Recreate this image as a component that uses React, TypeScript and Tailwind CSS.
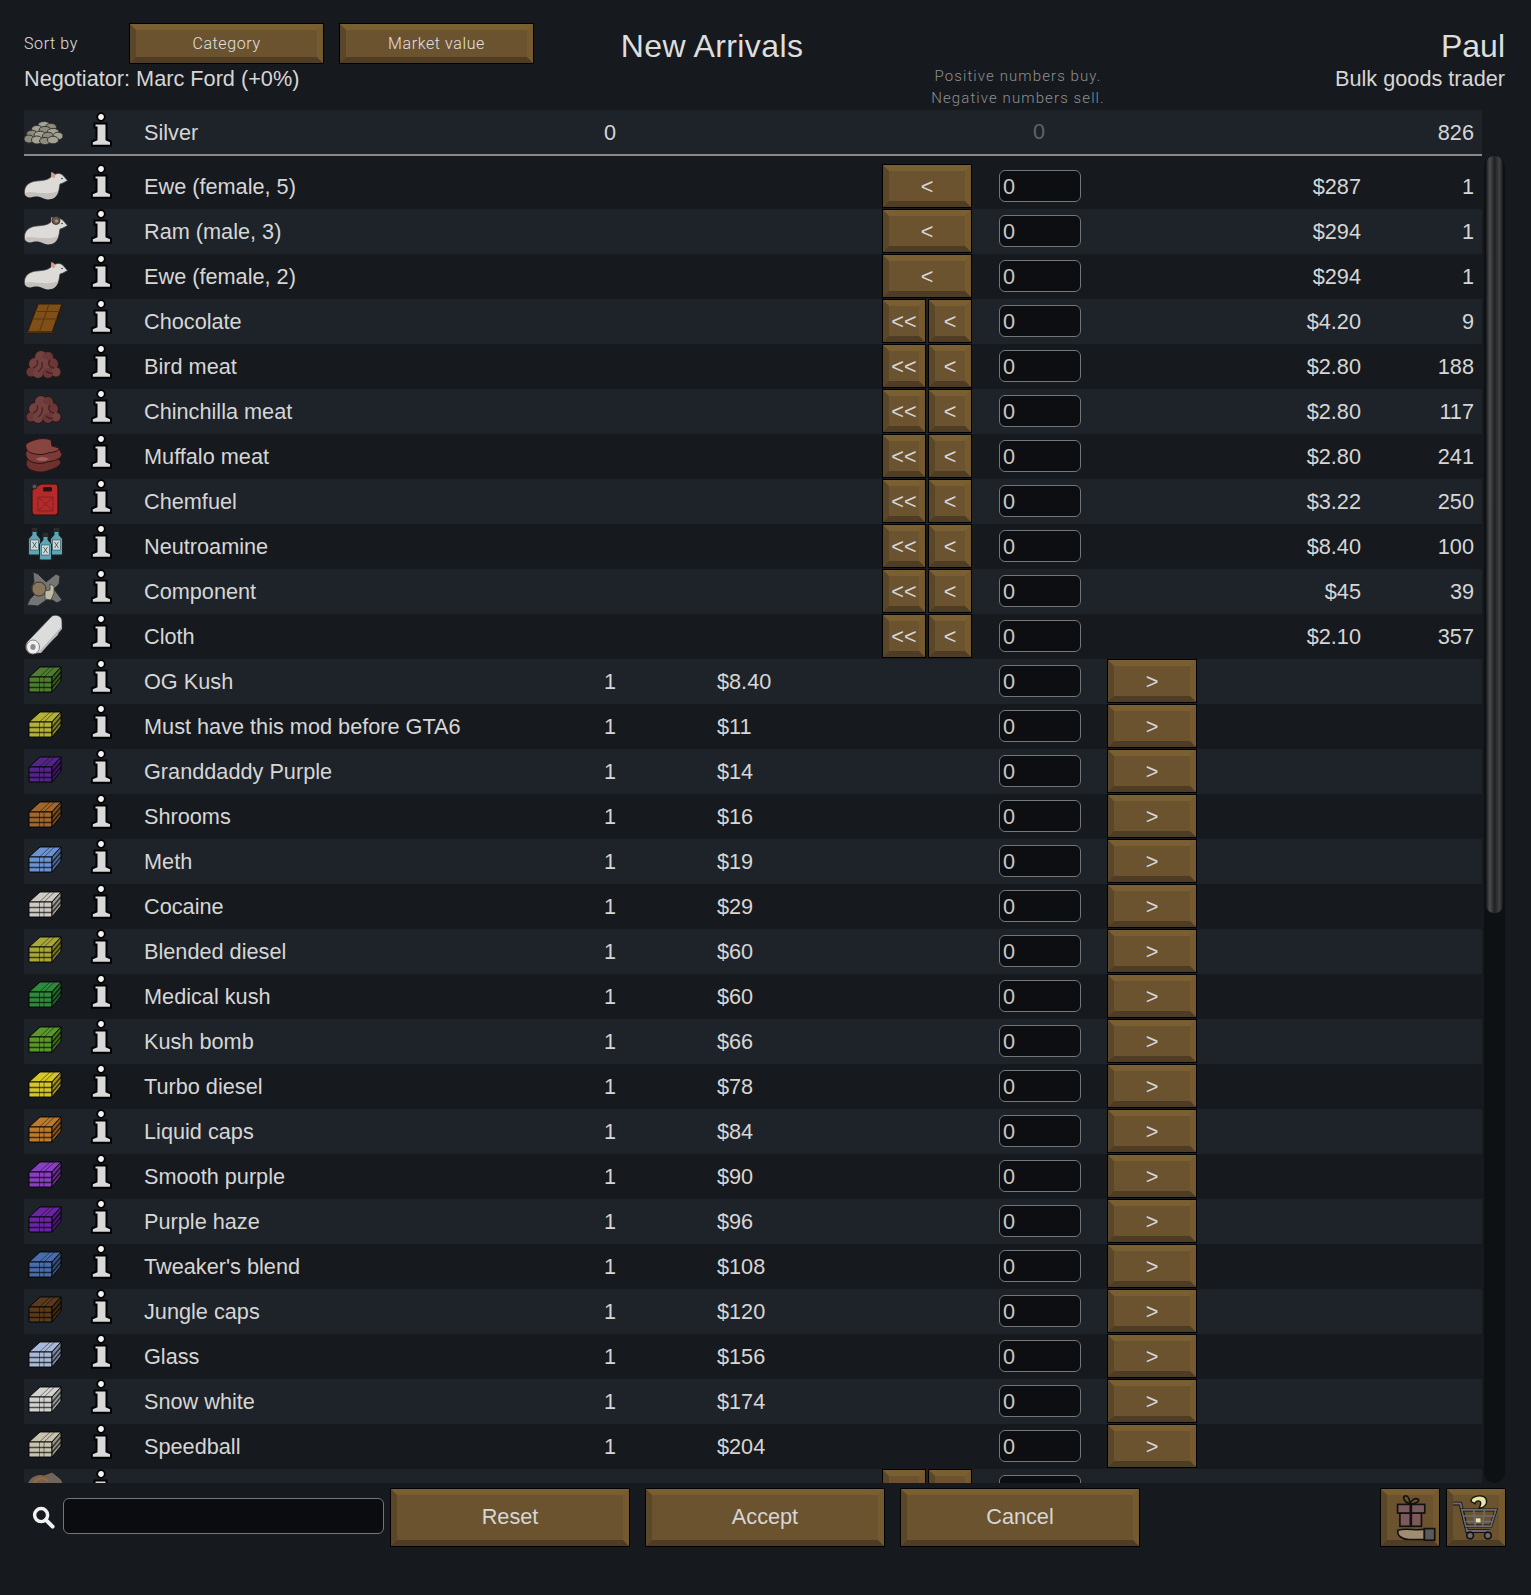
import type { ReactNode } from 'react'

type Item = {
  icon: string
  name: string
  price: string
  stock?: string
  color?: string
  double?: boolean
}

const traderItems: Item[] = [
  { icon: 'ewe', name: 'Ewe (female, 5)', price: '$287', stock: '1' },
  { icon: 'ram', name: 'Ram (male, 3)', price: '$294', stock: '1' },
  { icon: 'ewe', name: 'Ewe (female, 2)', price: '$294', stock: '1' },
  { icon: 'chocolate', name: 'Chocolate', price: '$4.20', stock: '9', double: true },
  { icon: 'meat', name: 'Bird meat', price: '$2.80', stock: '188', double: true },
  { icon: 'meat', name: 'Chinchilla meat', price: '$2.80', stock: '117', double: true },
  { icon: 'muffalo', name: 'Muffalo meat', price: '$2.80', stock: '241', double: true },
  { icon: 'chemfuel', name: 'Chemfuel', price: '$3.22', stock: '250', double: true },
  { icon: 'neutroamine', name: 'Neutroamine', price: '$8.40', stock: '100', double: true },
  { icon: 'component', name: 'Component', price: '$45', stock: '39', double: true },
  { icon: 'cloth', name: 'Cloth', price: '$2.10', stock: '357', double: true },
]

const colonyItems: Item[] = [
  { icon: 'bale', color: '#4f7d2f', name: 'OG Kush', price: '$8.40' },
  { icon: 'bale', color: '#b4b238', name: 'Must have this mod before GTA6', price: '$11' },
  { icon: 'bale', color: '#54248a', name: 'Granddaddy Purple', price: '$14' },
  { icon: 'bale', color: '#a0682e', name: 'Shrooms', price: '$16' },
  { icon: 'bale', color: '#6b93d2', name: 'Meth', price: '$19' },
  { icon: 'bale', color: '#cfcbc4', name: 'Cocaine', price: '$29' },
  { icon: 'bale', color: '#a8a836', name: 'Blended diesel', price: '$60' },
  { icon: 'bale', color: '#2f8a3e', name: 'Medical kush', price: '$60' },
  { icon: 'bale', color: '#5a982a', name: 'Kush bomb', price: '$66' },
  { icon: 'bale', color: '#d6c62a', name: 'Turbo diesel', price: '$78' },
  { icon: 'bale', color: '#bc7a2a', name: 'Liquid caps', price: '$84' },
  { icon: 'bale', color: '#8a3fc0', name: 'Smooth purple', price: '$90' },
  { icon: 'bale', color: '#6a25a5', name: 'Purple haze', price: '$96' },
  { icon: 'bale', color: '#4a6ea8', name: "Tweaker's blend", price: '$108' },
  { icon: 'bale', color: '#5a3a1c', name: 'Jungle caps', price: '$120' },
  { icon: 'bale', color: '#a9b9d8', name: 'Glass', price: '$156' },
  { icon: 'bale', color: '#d2d2d0', name: 'Snow white', price: '$174' },
  { icon: 'bale', color: '#c8c4b0', name: 'Speedball', price: '$204' },
]

function Bevel({ className, children }: { className: string; children?: ReactNode }) {
  return (
    <button
      className={`flex shrink-0 items-center justify-center border border-black ${className}`}
    >
      <span className="flex h-full w-full items-center justify-center border-[6px] border-t-[#7a5f33] border-r-[#75592f] border-b-[#4e3d24] border-l-[#5a4628] bg-[#6b5330]">
        {children}
      </span>
    </button>
  )
}

function InfoIcon() {
  return (
    <svg width="21" height="35" viewBox="0 0 21 35" className="ml-[23px] shrink-0">
      <circle cx="10" cy="5" r="3.8" fill="#f4f4f4" stroke="#000" strokeWidth="1.8" />
      <path
        d="M3.5 11.5H15.5V27.5L20 29.5V33.8H0.8V29.5L5.5 27.5V15.5H3.5Z"
        fill="#d9d9d9"
        stroke="#000"
        strokeWidth="2"
      />
    </svg>
  )
}

function Sheep({ ram }: { ram?: boolean }) {
  return (
    <>
      <path
        d="M0.5 27C1 21 6 17.5 13 17C19 16.5 24 16 27 13L27.5 8L31 10.5C34 8.5 38 9.5 40 12.5L43.5 16.5L39 19L36 20C35 25 35 29 32 32C29 36 23 36 19 34C15 32 11 31.5 8 33C3 34 0 32 0.5 27Z"
        fill="#dddbd7"
        stroke="#45433f"
        strokeWidth="0.7"
      />
      <path
        d="M1 29C6 27 11 29 16 29C22 29 28 30 34 27C33 30 33 31 32 32C29 36 23 36 19 34C15 32 11 31.5 8 33C4 34 1 32 1 29Z"
        fill="#c4c1bc"
      />
      <path d="M27 13L27.5 8L31.5 10.5L30.5 14Z" fill="#d59c8c" />
      <circle cx="38" cy="14.5" r="0.8" fill="#333" />
      {ram && (
        <>
          <circle cx="32" cy="11.5" r="4" fill="#6b5a4c" stroke="#2d2620" strokeWidth="0.8" />
          <circle cx="32.5" cy="12" r="1.5" fill="#a59786" />
        </>
      )}
    </>
  )
}

function ItemIcon({ kind, color }: { kind: string; color?: string }) {
  let art: ReactNode = null
  if (kind === 'silver') {
    const stones = [
      [20, 13, 6, 3.6],
      [27, 15, 5.5, 3.6],
      [13, 17, 5.5, 3.6],
      [21, 18, 6, 3.6],
      [29, 20, 6, 3.6],
      [8, 22, 5.5, 3.8],
      [16, 23, 6, 3.8],
      [24, 24, 5.5, 3.8],
      [34, 24, 5, 3.8],
      [5, 27, 5, 4],
      [13, 28, 5.5, 4],
      [21, 29, 5.5, 3.6],
      [29, 28, 5.5, 3.8],
    ]
    art = stones.map(([cx, cy, rx, ry], i) => (
      <ellipse
        key={i}
        cx={cx}
        cy={cy}
        rx={rx}
        ry={ry}
        fill={i % 2 ? '#8c8b7e' : '#a3a294'}
        stroke="#2e2e29"
        strokeWidth="0.9"
      />
    ))
  }
  if (kind === 'ewe') art = <Sheep />
  if (kind === 'ram') art = <Sheep ram />
  if (kind === 'chocolate') {
    art = (
      <>
        <path d="M14 5H38L28 34H3Z" fill="#7f4f18" stroke="#2b1a08" strokeWidth="1.2" />
        <path d="M8.5 20H33M11 12.5H35.5M25 5L15 34" stroke="#5c3810" strokeWidth="1.1" />
        <path d="M3 34H28L29 32H4Z" fill="#4e2e0c" />
      </>
    )
  }
  if (kind === 'meat') {
    const lumps = [
      [17, 13, 7],
      [24, 13, 6],
      [11, 20, 7],
      [28, 20, 7],
      [19, 21, 8],
      [7, 28, 5.5],
      [14, 29, 6],
      [24, 29, 6],
      [32, 28, 5.5],
    ]
    art = (
      <>
        {lumps.map(([cx, cy, r], i) => (
          <circle key={i} cx={cx} cy={cy} r={r} fill="#2c1818" />
        ))}
        {lumps.map(([cx, cy, r], i) => (
          <circle key={i} cx={cx} cy={cy} r={r - 1} fill={i % 2 ? '#6a3838' : '#734040'} />
        ))}
        <path
          d="M13 16C15 20 12 23 9 24M26 16C23 20 26 24 30 24M18 18C19 23 17 26 14 28M22 27C24 29 26 30 29 29"
          fill="none"
          stroke="#45211f"
          strokeWidth="1.3"
        />
      </>
    )
  }
  if (kind === 'muffalo') {
    art = (
      <>
        <path
          d="M3 26C1 30 3 34 7 36C12 38 18 39 23 37C29 35 36 33 37 28L33 23H8Z"
          fill="#6d3230"
          stroke="#2b1513"
          strokeWidth="1"
        />
        <path
          d="M2 18C1 22 3 25 6 27C12 30 18 30 23 28C30 27 38 25 38 20L35 15L32 12H8Z"
          fill="#7c3b38"
          stroke="#2b1513"
          strokeWidth="1"
        />
        <path
          d="M2 10C1 14 3 17 7 19C13 21 19 21 24 19C28 18 35 18 35 14L28 12L27 6C20 3 9 5 2 10Z"
          fill="#874441"
          stroke="#2b1513"
          strokeWidth="1"
        />
        <path d="M12 25C16 22 22 23 25 25C21 28 15 28 12 25Z" fill="#a35f5b" />
      </>
    )
  }
  if (kind === 'chemfuel') {
    art = (
      <>
        <path
          d="M13 7L17 5H31C33 5 34 7 34 9V33C34 35 33 36 31 36H11C9 36 8 35 8 33V11Z"
          fill="#b22a2a"
          stroke="#2b1010"
          strokeWidth="1.2"
        />
        <rect x="19" y="8" width="9" height="4.5" rx="1.5" fill="#2b1010" />
        <circle cx="10.5" cy="7.5" r="2.5" fill="#555" stroke="#222" />
        <path d="M14 18H29V32H14ZM14 18L29 32M29 18L14 32" fill="none" stroke="#8a2020" strokeWidth="1" />
      </>
    )
  }
  if (kind === 'neutroamine') {
    const bottles = [
      [4, 4],
      [26, 4],
      [15, 9],
    ]
    art = bottles.map(([x, y], i) => (
      <g key={i} transform={`translate(${x} ${y})`}>
        <path
          d="M4 0H9V7L12.5 11V25C12.5 26 12 27 11 27H2C1 27 0.5 26 0.5 25V11L4 7Z"
          fill="#5ea6b6"
          stroke="#16262a"
          strokeWidth="1"
        />
        <rect x="4" y="0" width="5" height="4" fill="#2c2c2c" />
        <rect x="2.5" y="12" width="8" height="10" fill="#cfdada" stroke="#39474a" strokeWidth="0.6" />
        <path d="M4.5 14L8.5 20M8.5 14L4.5 20" stroke="#39474a" strokeWidth="0.8" />
      </g>
    ))
  }
  if (kind === 'component') {
    art = (
      <>
        <path
          d="M9 3L14 5L22 13L32 5L36 7L35 15L30 20L38 31L33 34L25 29L14 37L3 36L6 30L11 25L7 18L10 13Z"
          fill="#757575"
          stroke="#2a2a2a"
          strokeWidth="1"
        />
        <circle cx="15" cy="20" r="7" fill="#88765d" stroke="#3a3226" strokeWidth="1" />
        <path d="M21 30V22L26 21V15L30 17V24L27 31Z" fill="#bdbda4" stroke="#3f3f34" strokeWidth="0.8" />
      </>
    )
  }
  if (kind === 'cloth') {
    art = (
      <>
        <path d="M3 28L28 2C32 0 38 2 38 7L38 13L35 17L34 21L15 39L8 40C2 39 0 33 3 28Z" fill="#dcdcdc" stroke="#3a3a3a" strokeWidth="0.8" />
        <ellipse cx="9" cy="33" rx="6.5" ry="7" fill="#f0f0f0" stroke="#6a6a6a" strokeWidth="0.8" />
        <ellipse cx="9" cy="33" rx="2.6" ry="3" fill="#8c8c8c" />
        <path d="M17 39L38 15V12L14 39Z" fill="#b8b8b8" />
      </>
    )
  }
  if (kind === 'bale') {
    art = (
      <>
        <path d="M5 18L16 8H37L28 18Z" fill={color} stroke="#000" strokeWidth="0.9" />
        <path d="M5 18H28V33H5Z" fill={color} stroke="#000" strokeWidth="0.9" />
        <path d="M28 18L37 8V22L28 33Z" fill={color} stroke="#000" strokeWidth="0.9" />
        <path d="M28 18L37 8V22L28 33Z" fill="#000" opacity="0.25" />
        <path
          d="M5 23.5H28L37 13M5 28.5H28L37 18"
          fill="none"
          stroke="#000"
          strokeOpacity="0.65"
          strokeWidth="1.6"
        />
        <path
          d="M15.5 33V18L26 8M20 33V18L30.5 8"
          fill="none"
          stroke="#000"
          strokeOpacity="0.45"
          strokeWidth="1"
        />
      </>
    )
  }
  if (kind === 'rock') {
    art = (
      <>
        <path d="M3 16C5 8 13 4 20 6L28 3L37 10L40 16Z" fill="#6f655c" stroke="#1f1b18" strokeWidth="1" />
        <path d="M10 14C14 8 20 8 24 12" fill="none" stroke="#a9662f" strokeWidth="2" />
      </>
    )
  }
  return (
    <svg width="44" height="44" viewBox="0 0 44 44" className="shrink-0 self-start">
      {art}
    </svg>
  )
}

function ItemRow({ item, index, colony }: { item: Item; index: number; colony?: boolean }) {
  return (
    <div className={`flex h-[45px] shrink-0 items-center ${index % 2 ? 'bg-[#1e2329]' : ''}`}>
      <ItemIcon kind={item.icon} color={item.color} />
      <div className="w-[76px] shrink-0 self-start">
        <InfoIcon />
      </div>
      <div className="w-[445px] shrink-0">{item.name}</div>
      <div className="w-[42px] shrink-0 text-center">{colony ? '1' : ''}</div>
      <div className="ml-[86px] w-[165px] shrink-0">{colony ? item.price : ''}</div>
      <div className="flex h-[44px] w-[90px] shrink-0 gap-[2px] self-start">
        {!colony &&
          (item.double ? (
            <>
              <Bevel className="h-[44px] w-[44px]">
                <span className="mt-[2px]">&lt;&lt;</span>
              </Bevel>
              <Bevel className="h-[44px] w-[44px]">
                <span className="mt-[2px]">&lt;</span>
              </Bevel>
            </>
          ) : (
            <Bevel className="h-[44px] w-[90px]">
              <span className="mt-[2px]">&lt;</span>
            </Bevel>
          ))}
      </div>
      <input
        readOnly
        value="0"
        className="ml-[27px] mt-[6px] h-[32px] w-[82px] shrink-0 self-start rounded-md border-[1.5px] border-[#74777a] bg-[#0c0e11] px-[3px] pt-[2px] text-[#c8c8c8] outline-none"
      />
      <div className="ml-[26px] h-[44px] w-[90px] shrink-0 self-start">
        {colony && (
          <Bevel className="h-[44px] w-[90px]">
            <span className="mt-[2px]">&gt;</span>
          </Bevel>
        )}
      </div>
      <div className="w-[164px] shrink-0 text-right">{colony ? '' : item.price}</div>
      <div className="w-[113px] shrink-0 text-right">{colony ? '' : item.stock}</div>
    </div>
  )
}

export default function App() {
  const rows = [...traderItems, ...colonyItems]
  return (
    <div className="h-[1595px] w-[1531px] overflow-hidden bg-[#161a1f] pl-6 font-['Liberation_Sans',Arial,sans-serif] text-[21.7px] leading-[26px] text-[#d6d6d6]">
      {/* Header */}
      <div className="flex h-[110px]">
        <div className="w-[510px] shrink-0 pt-[23px]">
          <div className="flex h-[41px] items-center font-['Roboto',sans-serif] text-[16px] font-light tracking-[0.6px] text-[#e0e0e0]">
            <span className="w-[105px] shrink-0">Sort by</span>
            <Bevel className="h-[41px] w-[195px]">Category</Bevel>
            <Bevel className="ml-[15px] h-[41px] w-[195px]">Market value</Bevel>
          </div>
          <div className="mt-[2px]">Negotiator: Marc Ford (+0%)</div>
        </div>
        <div className="w-[356px] shrink-0 pt-[27px] text-center text-[32px] leading-[38px] tracking-[0.4px] text-[#dedede]">
          New Arrivals
        </div>
        <div className="w-[256px] shrink-0 pt-[65px] text-center font-['Roboto',sans-serif] text-[15px] font-light leading-[22px] tracking-[1.1px] text-[#8f8f8f]">
          <div>Positive numbers buy.</div>
          <div>Negative numbers sell.</div>
        </div>
        <div className="w-[359px] shrink-0 pt-[27px] text-right">
          <div className="text-[32px] leading-[38px] text-[#dedede]">Paul</div>
          <div className="mt-px">Bulk goods trader</div>
        </div>
      </div>

      {/* Silver row */}
      <div className="flex h-[46px] w-[1458px] items-center border-b-2 border-[#8a8a8a] bg-[#1e2329] pt-[2px]">
        <ItemIcon kind="silver" />
        <div className="w-[76px] shrink-0 self-start">
          <InfoIcon />
        </div>
        <div className="w-[445px] shrink-0">Silver</div>
        <div className="w-[42px] shrink-0 text-center">0</div>
        <div className="mb-[2px] ml-[388px] w-[40px] shrink-0 text-center text-[#5f6266]">0</div>
        <div className="grow pr-2 text-right">826</div>
      </div>

      {/* Scrolling list */}
      <div className="flex h-[1327px]">
        <div className="flex h-full w-[1458px] shrink-0 flex-col overflow-hidden pt-[8px]">
          {rows.map((item, i) =>
            i < traderItems.length ? (
              <ItemRow key={i} item={item} index={i} />
            ) : (
              <ItemRow key={i} item={item} index={i} colony />
            ),
          )}
          <ItemRow item={{ icon: 'rock', name: '', price: '$', double: true }} index={29} />
        </div>
        <div className="ml-[2px] h-full w-[21px] shrink-0 rounded-full bg-[#0e1114] px-[2px]">
          <div className="h-[757px] rounded-[8px] bg-[linear-gradient(90deg,#17191c_0%,#4b4d4f_22%,#1f2123_50%,#3f4143_80%,#15171a_100%)]" />
        </div>
      </div>

      {/* Footer */}
      <div className="flex pt-[5px]">
        <svg width="23" height="23" viewBox="0 0 24 24" className="ml-[8px] mt-[18px] shrink-0">
          <circle cx="9.5" cy="9.5" r="6.8" fill="none" stroke="#f2f2f2" strokeWidth="3.6" />
          <path d="M14.5 14.5L21.5 21.5" stroke="#f2f2f2" strokeWidth="4.2" strokeLinecap="round" />
        </svg>
        <input
          readOnly
          className="ml-[8px] mt-[10px] h-[36px] w-[321px] shrink-0 rounded-md border-[1.5px] border-[#74777a] bg-[#0a0c0f] outline-none"
        />
        <div className="ml-[6px] flex gap-[15px]">
          <Bevel className="h-[59px] w-[240px]">
            <span className="mb-[2px]">Reset</span>
          </Bevel>
          <Bevel className="h-[59px] w-[240px]">
            <span className="mb-[2px]">Accept</span>
          </Bevel>
          <Bevel className="h-[59px] w-[240px]">
            <span className="mb-[2px]">Cancel</span>
          </Bevel>
        </div>
        <Bevel className="ml-[240px] h-[59px] w-[60px]">
          <svg width="59" height="59" viewBox="15 22 178 175" className="-m-[6px] shrink-0">
            <path d="M100 68C85 62 78 48 88 44C98 42 102 58 102 68C108 56 118 48 128 55C132 62 118 68 104 70" fill="none" stroke="#111" strokeWidth="5" />
            <rect x="72" y="96" width="65" height="40" fill="#7c5a5c" stroke="#111" strokeWidth="5" />
            <rect x="65" y="70" width="82" height="26" fill="#7c5a5c" stroke="#111" strokeWidth="5" />
            <path d="M105 70V136" stroke="#111" strokeWidth="8" />
            <path d="M66 148C90 140 120 150 146 145V176H100C80 176 62 165 66 148Z" fill="#a08c74" stroke="#111" strokeWidth="5" />
            <rect x="146" y="143" width="31" height="35" fill="#5a5a5a" stroke="#111" strokeWidth="5" />
          </svg>
        </Bevel>
        <Bevel className="ml-[6px] h-[59px] w-[60px]">
          <svg width="60" height="59" viewBox="213 22 179 175" className="-m-[6px] shrink-0">
            <path d="M288 62C284 45 325 38 333 55C338 70 325 82 312 82C314 74 320 68 315 62C310 58 300 60 300 68Z" fill="#e8e4a8" stroke="#111" strokeWidth="4" />
            <path d="M234 68H256L276 150H345" fill="none" stroke="#111" strokeWidth="11" />
            <path d="M234 68H256L276 150H345" fill="none" stroke="#6c6c70" strokeWidth="6" />
            <path d="M260 87H362L347 135H272Z" fill="none" stroke="#111" strokeWidth="9" />
            <path d="M260 87H362L347 135H272Z" fill="none" stroke="#6c6c70" strokeWidth="5" />
            <path d="M266 105H356M272 122H350M296 87L300 135M328 87L322 135" stroke="#6c6c70" strokeWidth="5" />
            <rect x="302" y="112" width="14" height="12" fill="#e8e4a8" />
            <circle cx="285" cy="163" r="10" fill="#6c6c70" stroke="#111" strokeWidth="5" />
            <circle cx="338" cy="163" r="10" fill="#6c6c70" stroke="#111" strokeWidth="5" />
          </svg>
        </Bevel>
      </div>
    </div>
  )
}
